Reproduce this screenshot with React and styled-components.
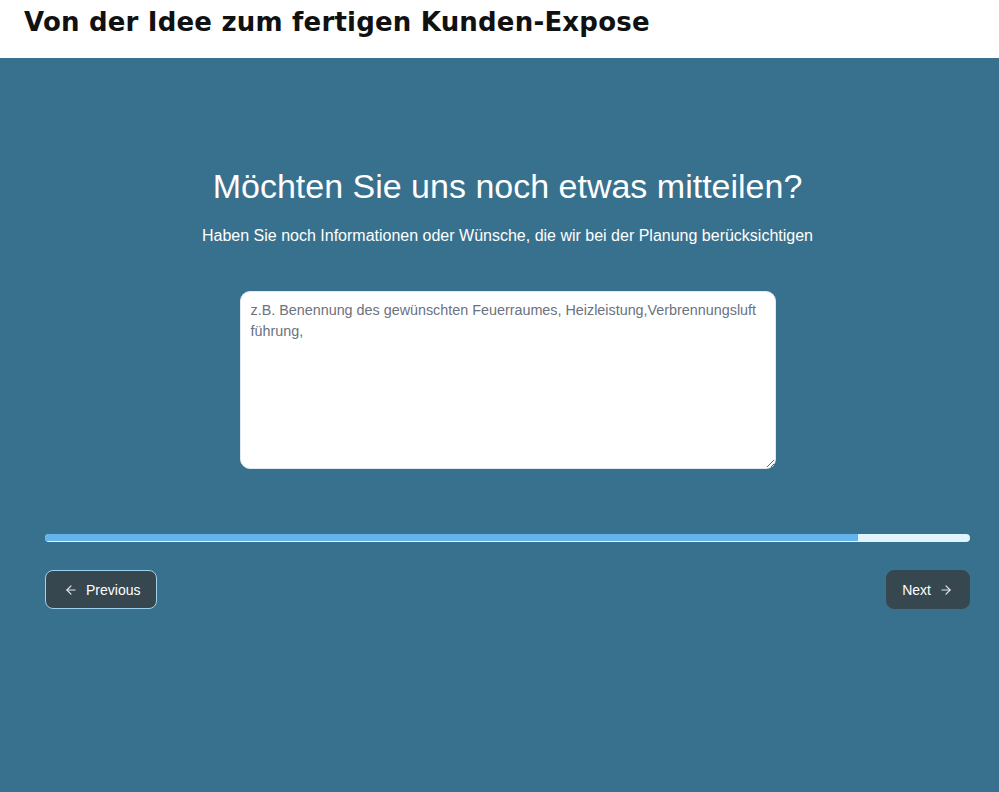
import React from "react";
import styled, { createGlobalStyle } from "styled-components";

const Global = createGlobalStyle`
  html, body { margin: 0; padding: 0; }
  body { font-family: "Liberation Sans", Arial, sans-serif; background: #38718e; }
  * { box-sizing: border-box; }
`;

const Page = styled.div`
  min-height: 792px;
  display: flex;
  flex-direction: column;
`;

const Header = styled.header`
  height: 58px;
  background: #ffffff;
  padding: 4px 24px 0;
`;

const Brand = styled.h1`
  margin: 0;
  font-family: "DejaVu Sans", "Noto Sans", sans-serif;
  font-weight: 700;
  font-size: 26px;
  line-height: 36px;
  color: #111111;
  letter-spacing: 0.2px;
`;

const Main = styled.main`
  flex: 1;
  background: #38718e;
  padding: 109px 29px 40px 45px;
  display: flex;
  flex-direction: column;
  align-items: center;
`;

const Title = styled.h2`
  margin: 0;
  font-weight: 400;
  font-size: 34px;
  line-height: 38px;
  color: #ffffff;
  text-align: center;
`;

const Subtitle = styled.p`
  margin: 19px 0 0;
  font-size: 16px;
  line-height: 24px;
  color: #ffffff;
  text-align: center;
`;

const TextArea = styled.textarea`
  margin-top: 43px;
  width: 536px;
  height: 178px;
  border: 1px solid #e2e8f0;
  border-radius: 10px;
  background: #ffffff;
  padding: 8px 10px;
  font-family: "Liberation Sans", Arial, sans-serif;
  font-size: 14.35px;
  line-height: 21px;
  color: #1f2937;
  resize: vertical;
  outline: none;
  &::placeholder { color: #6b7280; }
`;

const Track = styled.div`
  margin-top: 65px;
  width: 100%;
  height: 8px;
  border-radius: 4px;
  background: #e0f4fe;
  overflow: hidden;
`;

const Fill = styled.div`
  height: 7px;
  background: #63b3ed;
`;

const Nav = styled.div`
  margin-top: 28px;
  width: 100%;
  display: flex;
  justify-content: space-between;
`;

const NavButton = styled.button`
  height: 39px;
  display: inline-flex;
  align-items: center;
  gap: 8px;
  padding: ${(p) => (p.$next ? "0 16px 0 15px" : "0 16px 0 18px")};
  border-radius: 8px;
  border: 1px solid ${(p) => (p.$outlined ? "#9fd0ec" : "#37474f")};
  background: #37474f;
  color: #ffffff;
  font-family: "Liberation Sans", Arial, sans-serif;
  font-size: 14px;
  cursor: pointer;
`;

const Arrow = ({ dir }) => (
  <svg width="14" height="14" viewBox="0 0 24 24" fill="none" stroke="#e5e7eb" strokeWidth="2" strokeLinecap="round" strokeLinejoin="round">
    {dir === "left" ? (
      <>
        <path d="M19 12H5" />
        <path d="M12 5l-7 7 7 7" />
      </>
    ) : (
      <>
        <path d="M5 12h14" />
        <path d="M12 5l7 7-7 7" />
      </>
    )}
  </svg>
);

export default function App() {
  const progress = 87.9;
  return (
    <Page>
      <Global />
      <Header>
        <Brand>Von der Idee zum fertigen Kunden-Expose</Brand>
      </Header>
      <Main>
        <Title>Möchten Sie uns noch etwas mitteilen?</Title>
        <Subtitle>Haben Sie noch Informationen oder Wünsche, die wir bei der Planung berücksichtigen</Subtitle>
        <TextArea placeholder="z.B. Benennung des gewünschten Feuerraumes, Heizleistung,Verbrennungsluft führung," />
        <Track>
          <Fill style={{ width: `${progress}%` }} />
        </Track>
        <Nav>
          <NavButton $outlined>
            <Arrow dir="left" />
            Previous
          </NavButton>
          <NavButton $next>
            Next
            <Arrow dir="right" />
          </NavButton>
        </Nav>
      </Main>
    </Page>
  );
}
